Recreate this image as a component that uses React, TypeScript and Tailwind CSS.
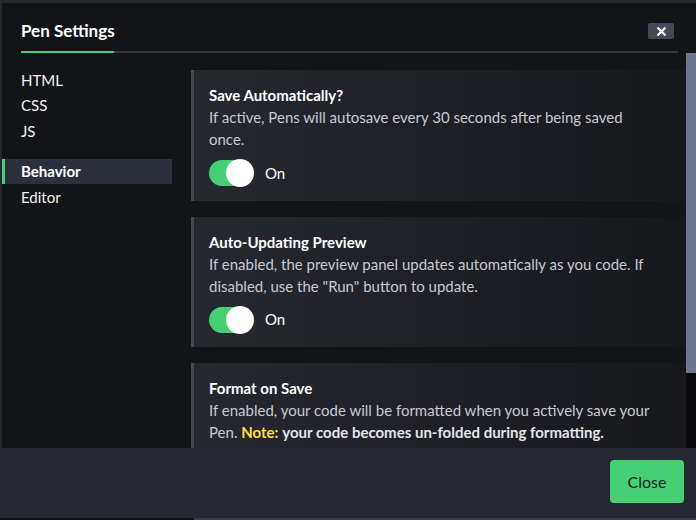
import React from "react";

const navTop = ["HTML", "CSS", "JS"];
const navBottom = ["Behavior", "Editor"];

const Toggle = () => (
	<div className="mt-[9px] flex h-[28px] items-center gap-[10px]">
		<div className="relative h-[28px] w-[46px]">
			<div className="absolute left-0 right-[2px] top-[1px] h-[26px] rounded-full bg-[#47cf73]" />
			<div className="absolute right-[1px] top-0 h-[28px] w-[28px] rounded-full bg-white" />
		</div>
		<span className="text-[15px] text-white">On</span>
	</div>
);

const Panel = ({
	title,
	children,
	toggle = true,
}: {
	title: string;
	children: React.ReactNode;
	toggle?: boolean;
}) => (
	<div className="shrink-0 border-l-[3px] border-[#444857] bg-gradient-to-r from-[#262830] to-[#17181c] pb-[13.5px] pl-[15px] pr-[36px] pt-[14px]">
		<h3 className="text-[15px] font-bold leading-[22px] text-white">{title}</h3>
		<p className="text-[15px] leading-[22px] text-[#c7c9d3]">{children}</p>
		{toggle && <Toggle />}
	</div>
);

export default function App() {
	return (
		<div className="h-[520px] w-[696px] overflow-hidden bg-[#262830] pl-[2px] pt-[3px] font-['Lato',sans-serif]">
			<div className="flex h-[515px] flex-col bg-[#131417]">
				<div className="pl-[19px] pr-[18px]">
					<div className="flex items-center justify-between pb-[11px] pt-[19px]">
						<h2 className="text-[17px] font-bold leading-[18px] text-white">Pen Settings</h2>
						<button className="mr-[4px] flex h-[16px] w-[26px] items-center justify-center rounded-[2px] bg-[#444857]">
							<svg width="11" height="11" viewBox="0 0 11 11">
								<path d="M1.5 1.5L9.5 9.5M9.5 1.5L1.5 9.5" stroke="white" strokeWidth="2.2" />
							</svg>
						</button>
					</div>
					<div className="flex h-[2px]">
						<div className="w-[93px] bg-[#47cf73]" />
						<div className="flex-1 bg-[#34363e]" />
					</div>
				</div>

				<div className="flex h-[395px] overflow-hidden">
					<nav className="w-[170px] shrink-0 pt-[14px] text-[15px] text-[#f2f2f2]">
						{navTop.map((item) => (
							<div key={item} className="flex h-[25.5px] items-center pl-[19px]">
								{item}
							</div>
						))}
						<div className="mt-[15px]">
							{navBottom.map((item) => (
								<div
									key={item}
									className={
										item === "Behavior"
											? "flex h-[25.5px] items-center border-l-[3px] border-[#47cf73] bg-[#2c303a] pl-[16px] font-bold text-white"
											: "flex h-[25.5px] items-center pl-[19px]"
									}
								>
									{item}
								</div>
							))}
						</div>
					</nav>

					<div className="flex min-w-0 flex-1 flex-col gap-[16px] overflow-hidden pl-[19px] pt-[17px]">
						<Panel title="Save Automatically?">
							If active, Pens will autosave every 30 seconds after being saved once.
						</Panel>
						<Panel title="Auto-Updating Preview">
							If enabled, the preview panel updates automatically as you code. If disabled, use the "Run" button to
							update.
						</Panel>
						<Panel title="Format on Save" toggle={false}>
							If enabled, your code will be formatted when you actively save your Pen.{" "}
							<span className="font-bold text-[#ffdd40]">Note:</span>{" "}
							<span className="font-bold text-[#e4e5eb]">your code becomes un-folded during formatting.</span>
						</Panel>
					</div>

					<div className="flex w-[10px] shrink-0 flex-col bg-[#0b0b0d]">
						<div className="h-[320px] bg-[#717790]" />
					</div>
				</div>

				<div className="flex flex-1 justify-end bg-[#252830] pr-[12px] pt-[12px]">
					<button className="h-[43px] w-[74px] rounded-[4px] bg-[#47cf73] text-[16px] text-[#1e1f26]">Close</button>
				</div>
			</div>
			<div className="-ml-[2px] flex h-[2px]">
				<div className="w-[194px] bg-[#0e0f12]" />
				<div className="flex-1 bg-[#3b3d45]" />
			</div>
		</div>
	);
}
